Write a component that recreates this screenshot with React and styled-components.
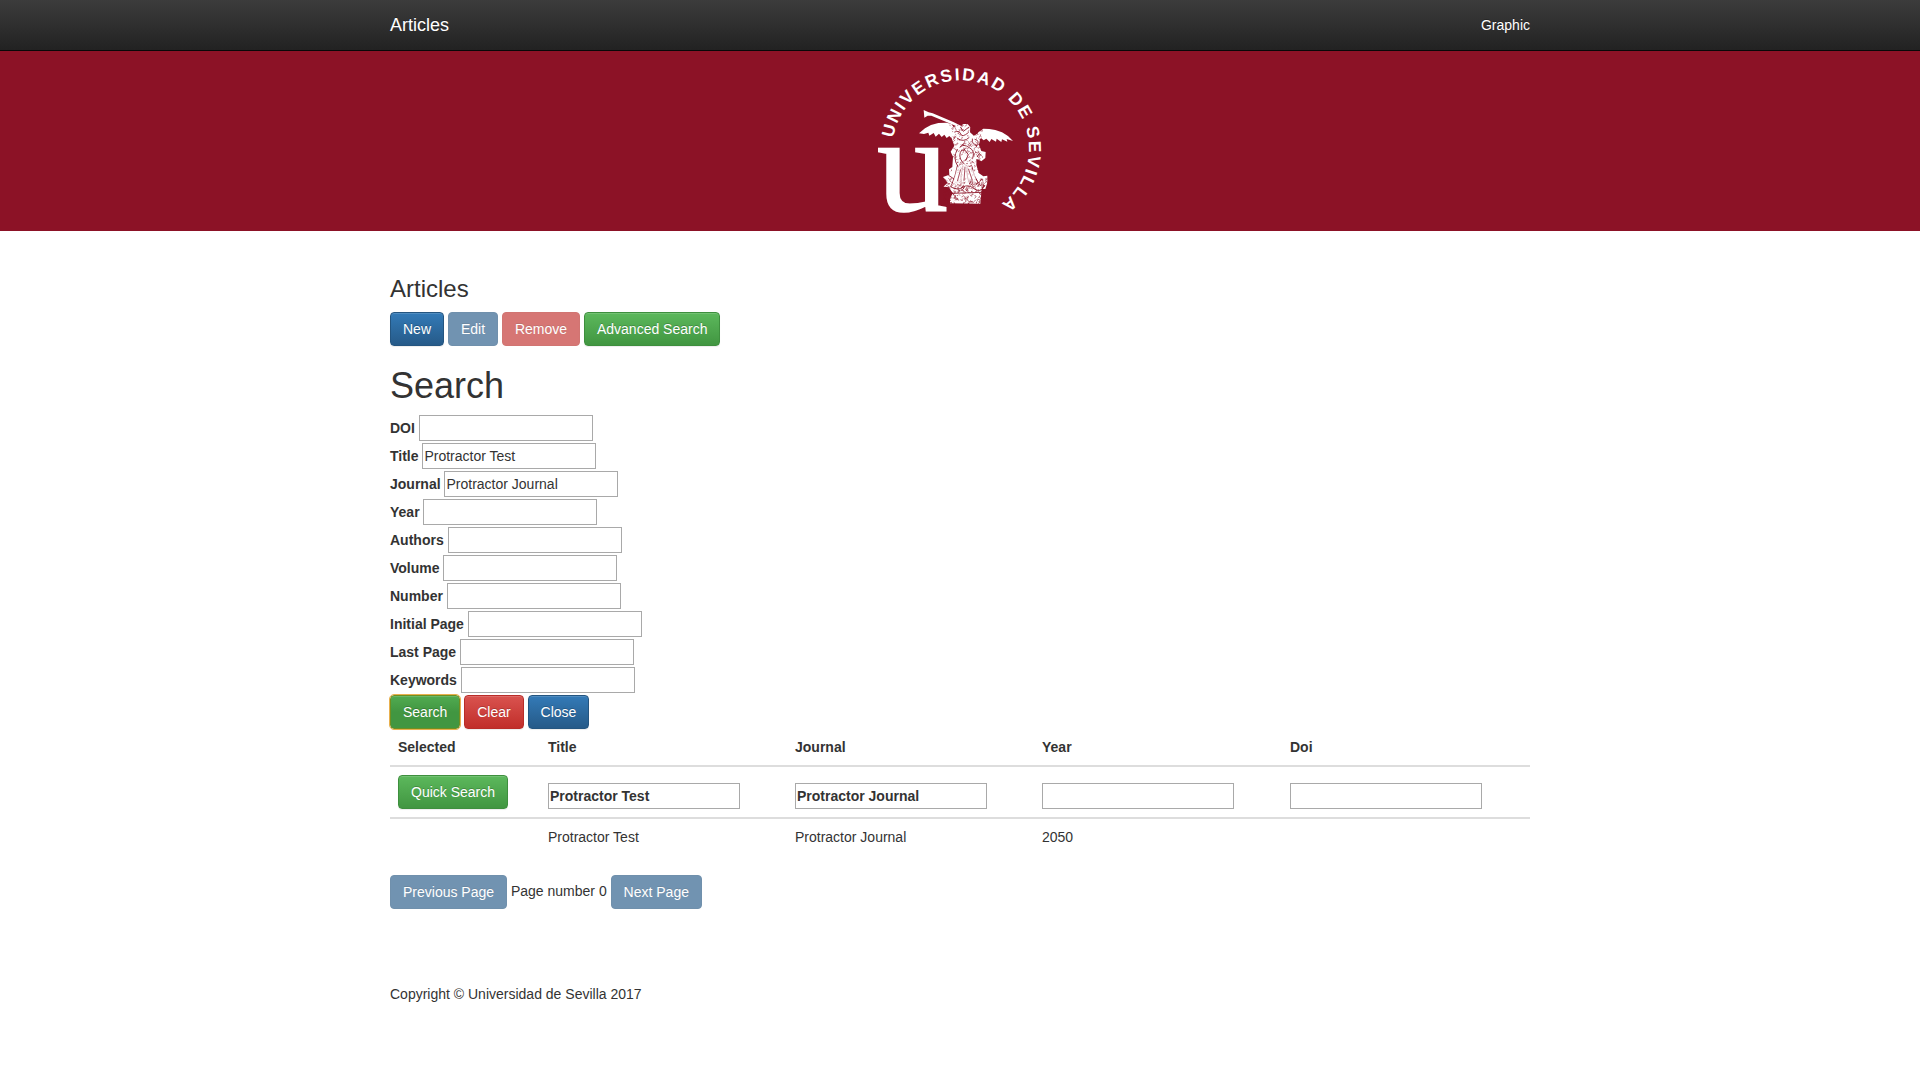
import React from "react";
import styled, { createGlobalStyle, css } from "styled-components";

const GlobalStyle = createGlobalStyle`
  *, *::before, *::after { box-sizing: border-box; }
  body {
    margin: 0;
    background: #fff;
    color: #333;
    font-family: "Liberation Sans", Arial, sans-serif;
    font-size: 14px;
    line-height: 20px;
  }
`;

const Navbar = styled.nav`
  height: 51px;
  background: linear-gradient(to bottom, #3c3c3c 0, #222 100%);
  border-bottom: 1px solid #080808;
`;

const Container = styled.div`
  width: 1140px;
  margin: 0 auto;
`;

const NavInner = styled(Container)`
  display: flex;
  justify-content: space-between;
  align-items: center;
  height: 50px;
`;

const Brand = styled.a`
  color: #fff;
  font-size: 18px;
  text-shadow: 0 -1px 0 rgba(0, 0, 0, 0.25);
`;

const NavLink = styled.a`
  color: #fff;
  text-shadow: 0 -1px 0 rgba(0, 0, 0, 0.25);
`;

const Banner = styled.header`
  display: flex;
  justify-content: center;
  height: 180px;
  background: #8c1226;
`;

const Logo = styled.svg`
  display: block;
  width: 200px;
  height: 180px;
  overflow: visible;
`;

const Main = styled(Container)`
  padding-top: 45px;
`;

const Heading = styled.h3`
  margin: 0 0 10px;
  font-size: 24px;
  font-weight: 500;
  line-height: 26px;
`;

const SearchHeading = styled.h1`
  margin: 20px 0 9px;
  font-size: 36px;
  font-weight: 500;
  line-height: 39px;
`;

const tones = {
  primary: ["#337ab7", "#265a88", "#245580"],
  danger: ["#d9534f", "#c12e2a", "#b92c28"],
  success: ["#5cb85c", "#419641", "#3e8f3e"],
};

const Button = styled.button`
  height: 34px;
  padding: 6px 12px;
  border: 1px solid ${(p) => tones[p.$tone][2]};
  border-radius: 4px;
  background: linear-gradient(
    to bottom,
    ${(p) => tones[p.$tone][0]} 0,
    ${(p) => tones[p.$tone][1]} 100%
  );
  color: #fff;
  font: inherit;
  font-weight: 400;
  white-space: nowrap;
  text-shadow: 0 -1px 0 rgba(0, 0, 0, 0.2);
  box-shadow: inset 0 1px 0 rgba(255, 255, 255, 0.15), 0 1px 1px rgba(0, 0, 0, 0.075);
  ${(p) =>
    p.disabled &&
    css`
      background: ${tones[p.$tone][1]};
      opacity: 0.65;
      box-shadow: none;
    `}
  ${(p) =>
    p.$active &&
    css`
      background: linear-gradient(to bottom, #51ab51 0, #419641 50%);
      border-color: #6f8f20;
      outline: 1px solid #e9b04e;
      outline-offset: 0;
    `}
`;

const ButtonRow = styled.div`
  display: flex;
  align-items: flex-start;
  gap: 3.9px;
`;

const Fields = styled.div`
  margin-bottom: 1px;
`;

const Field = styled.label`
  display: flex;
  align-items: center;
  gap: 3.9px;
  height: 28px;
  font-weight: 700;
`;

const Input = styled.input`
  display: block;
  width: ${(p) => p.$width}px;
  height: 26px;
  padding: 2px 1px;
  border: 1px solid #a9a9a9;
  border-radius: 0;
  background: #fff;
  color: inherit;
  font: inherit;
  font-weight: ${(p) => (p.$bold ? 700 : 400)};
  outline: none;
`;

const Table = styled.div`
  margin-bottom: 20px;
`;

const Row = styled.div`
  display: grid;
  grid-template-columns: 150px 247px 247px 248px 248px;
  border-bottom: ${(p) => (p.$ruled ? "2px solid #ddd" : "0")};
  font-weight: ${(p) => (p.$ruled ? 700 : 400)};
`;

const Cell = styled.div`
  display: flex;
  align-items: flex-end;
  padding: 8px;
`;

const PageLabel = styled.span`
  padding-top: 6px;
`;

const Footer = styled.footer`
  margin-top: 75px;
`;

const searchFields = [
  ["DOI", ""],
  ["Title", "Protractor Test"],
  ["Journal", "Protractor Journal"],
  ["Year", ""],
  ["Authors", ""],
  ["Volume", ""],
  ["Number", ""],
  ["Initial Page", ""],
  ["Last Page", ""],
  ["Keywords", ""],
];

const columns = ["Selected", "Title", "Journal", "Year", "Doi"];
const quickValues = ["Protractor Test", "Protractor Journal", "", ""];
const article = ["", "Protractor Test", "Protractor Journal", "2050", ""];

// Engraving-like flecks that give the statue its carved texture.
const makeFlecks = (count, x, y, w, h, seed) => {
  let s = seed;
  const next = () => {
    s = (s * 16807) % 2147483647;
    return s / 2147483647;
  };
  let d = "";
  for (let i = 0; i < count; i += 1) {
    const px = (x + next() * w).toFixed(1);
    const py = (y + next() * h).toFixed(1);
    const a = (next() * 12 - 6).toFixed(1);
    const b = (next() * 12 - 4).toFixed(1);
    d += `M${px} ${py}q${b} ${a} ${a} ${b}`;
  }
  return d;
};

const bodyFlecks = makeFlecks(190, 270, 225, 95, 150, 71);
const baseFlecks = makeFlecks(240, 250, 385, 132, 75, 193);

function UniversityLogo() {
  return (
    <Logo viewBox="0 3 600 540" aria-label="Universidad de Sevilla">
      <defs>
        <path id="ring" d="M 99.5 264 A 205 205 0 1 1 421 463" />
      </defs>
      <text
        fill="#fff"
        fontFamily="Liberation Sans, Arial, sans-serif"
        fontWeight="700"
        fontSize="52"
      >
        <textPath href="#ring" textLength="803" lengthAdjust="spacing">
          UNIVERSIDAD DE SEVILLA
        </textPath>
      </text>
      <text
        x="51"
        y="484"
        fill="#fff"
        stroke="#fff"
        strokeWidth="5"
        fontFamily="Liberation Serif, Times New Roman, serif"
        fontSize="404"
        textLength="213"
        lengthAdjust="spacingAndGlyphs"
      >
        u
      </text>
      <g fill="#fff">
        <path d="M191 180L206 187L218 190L280 216L304 228L300 233L272 221L214 197L203 197L193 203Z" />
        <path d="M177 250L195 235L213 225L235 219L260 218L274 222L281 232L281 248L274 264L268 258L260 264L253 254L245 261L237 251L227 260L221 249L208 257L205 248L192 252Z" />
        <path d="M344 260L356 246L370 236L388 237L406 240L426 247L444 258L459 273L440 267L442 275L426 268L424 276L410 266L408 275L394 267L389 276L379 266L371 271L363 264L352 277Z" />
        <path d="M281 232L291 225L302 232L309 222L323 222L331 232L330 247L342 257L350 252L361 264L357 284L364 303L377 306L376 324L364 334L350 327L349 345L357 370L370 379L382 377L382 398L376 417L365 416L361 461L270 460L270 446L278 430L267 412L250 410L263 398L249 381L268 374L267 358L277 351L279 320L272 305L283 287L274 262Z" />
      </g>
      <g fill="none" stroke="#8c1226" strokeLinecap="round">
        <path
          strokeWidth="2.6"
          d="M284 246Q298 240 302 252T325 248M292 265Q310 279 327 263M300 291Q310 280 328 293Q346 302 338 325M292 298Q277 325 293 348M306 299Q291 317 308 337T335 346M337 267Q335 285 350 287M359 309L352 320M312 297L325 314L317 331M292 348Q287 376 276 402M309 348Q300 378 303 402M321 351Q319 381 329 401M336 350Q340 378 354 398M266 376L282 387M273 411Q295 423 309 412T342 416T374 407M278 430L367 427M302 232L310 244L326 232M345 268Q363 271 348 292"
        />
        <path strokeWidth="1.5" d={bodyFlecks} />
        <path strokeWidth="1.7" d={baseFlecks} />
      </g>
      <path
        fill="#fff"
        d="M292 350L318 340L342 364L350 398L333 391L325 403L317 386L306 404L296 397L282 409L279 399Z"
        opacity="0.65"
      />
      <path
        fill="none"
        stroke="#8c1226"
        strokeWidth="2.2"
        d="M302 358L292 394M315 350L312 392M325 356L337 391"
      />
    </Logo>
  );
}

export default function App() {
  return (
    <>
      <GlobalStyle />
      <Navbar>
        <NavInner>
          <Brand>Articles</Brand>
          <NavLink>Graphic</NavLink>
        </NavInner>
      </Navbar>
      <Banner>
        <UniversityLogo />
      </Banner>
      <Main as="main">
        <Heading>Articles</Heading>
        <ButtonRow>
          <Button $tone="primary">New</Button>
          <Button $tone="primary" disabled>Edit</Button>
          <Button $tone="danger" disabled>Remove</Button>
          <Button $tone="success">Advanced Search</Button>
        </ButtonRow>
        <SearchHeading>Search</SearchHeading>
        <Fields>
          {searchFields.map(([label, value]) => (
            <Field key={label}>
              {label}
              <Input $width={174} defaultValue={value} />
            </Field>
          ))}
        </Fields>
        <ButtonRow>
          <Button $tone="success" $active>Search</Button>
          <Button $tone="danger">Clear</Button>
          <Button $tone="primary">Close</Button>
        </ButtonRow>
        <Table>
          <Row $ruled>
            {columns.map((name) => (
              <Cell key={name}>{name}</Cell>
            ))}
          </Row>
          <Row $ruled>
            <Cell>
              <Button $tone="success">Quick Search</Button>
            </Cell>
            {quickValues.map((value, i) => (
              <Cell key={columns[i + 1]}>
                <Input $width={192} $bold defaultValue={value} />
              </Cell>
            ))}
          </Row>
          <Row>
            {article.map((value, i) => (
              <Cell key={columns[i]}>{value}</Cell>
            ))}
          </Row>
        </Table>
        <ButtonRow>
          <Button $tone="primary" disabled>Previous Page</Button>
          <PageLabel>Page number 0</PageLabel>
          <Button $tone="primary" disabled>Next Page</Button>
        </ButtonRow>
        <Footer>Copyright © Universidad de Sevilla 2017</Footer>
      </Main>
    </>
  );
}
